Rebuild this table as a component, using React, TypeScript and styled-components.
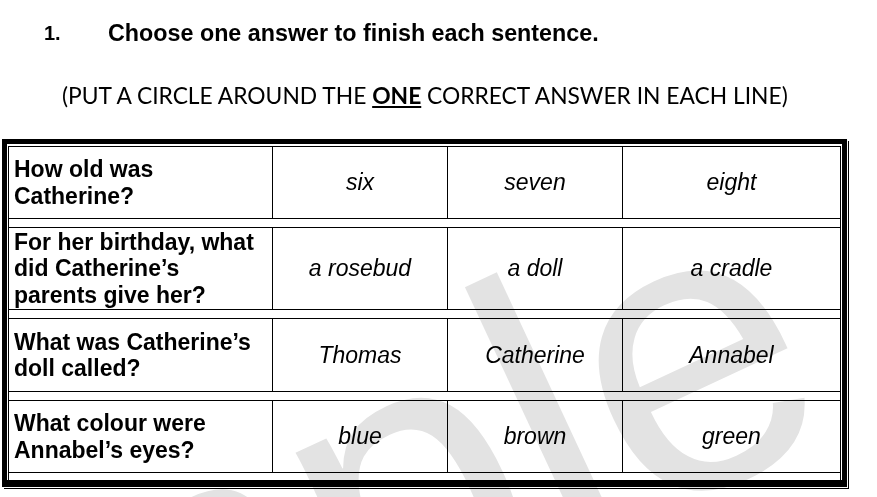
import React from 'react';
import styled, { createGlobalStyle } from 'styled-components';

const GlobalStyle = createGlobalStyle`
  html, body {
    margin: 0;
    padding: 0;
    background: #fff;
  }
  body {
    font-family: "Liberation Sans", Arial, sans-serif;
    color: #000;
  }
`;

const Page = styled.div`
  position: relative;
  width: 877px;
  height: 497px;
  overflow: hidden;
`;

const Heading = styled.div`
  display: flex;
  padding: 21px 0 0 44px;
  font-size: 23.3px;
  line-height: 24px;
  font-weight: bold;
`;

const Num = styled.span`
  width: 64px;
  font-size: 20px;
`;

const Instruction = styled.p`
  margin: 0;
  padding: 36px 0 0 62px;
  font-family: Lato, "Open Sans", sans-serif;
  font-size: 22.8px;
  line-height: 28px;

  u {
    font-weight: bold;
  }
`;

const Frame = styled.div`
  margin: 30px 0 0 2px;
  width: 845px;
  box-sizing: border-box;
  border: 5px solid #000;
  border-bottom-width: 7px;
  padding: 2px 1px 0 1px;
  box-shadow: 1px 1px 0 #fff, 2px 2px 0 #000;
`;

const Table = styled.div`
  border: 1px solid #000;
  border-bottom: none;
`;

const Row = styled.div<{ $h: number }>`
  display: grid;
  grid-template-columns: 264px 175px 175px 1fr;
  height: ${p => p.$h}px;
  border-bottom: 1px solid #000;
`;

const Spacer = styled.div<{ $last?: boolean }>`
  height: ${p => (p.$last ? 7 : 8)}px;
  border-bottom: ${p => (p.$last ? 'none' : '1px solid #000')};
`;

const Question = styled.div`
  display: flex;
  align-items: center;
  padding-left: 5px;
  border-right: 1px solid #000;
  font-weight: bold;
  font-size: 23px;
  line-height: 26.5px;
`;

const Answer = styled.div<{ $end?: boolean }>`
  display: flex;
  align-items: center;
  justify-content: center;
  border-right: ${p => (p.$end ? 'none' : '1px solid #000')};
  font-style: italic;
  font-size: 23px;
`;

const Watermark = styled.span`
  position: absolute;
  left: -607px;
  top: 231px;
  font-family: "Liberation Sans", Arial, sans-serif;
  font-size: 400px;
  line-height: 1;
  color: #e3e3e3;
  white-space: nowrap;
  transform-origin: 1090px 52px;
  transform: rotate(-25deg);
  mix-blend-mode: multiply;
  pointer-events: none;
`;

const rows = [
  { q: ['How old was', 'Catherine?'], a: ['six', 'seven', 'eight'], h: 71 },
  { q: ['For her birthday, what', 'did Catherine\u2019s', 'parents give her?'], a: ['a rosebud', 'a doll', 'a cradle'], h: 81 },
  { q: ['What was Catherine\u2019s', 'doll called?'], a: ['Thomas', 'Catherine', 'Annabel'], h: 72 },
  { q: ['What colour were', 'Annabel\u2019s eyes?'], a: ['blue', 'brown', 'green'], h: 71 },
];

const App: React.FC = () => {
  return (
    <Page>
      <GlobalStyle />
      <Heading>
        <Num>1.</Num>
        <span>Choose one answer to finish each sentence.</span>
      </Heading>
      <Instruction>
        (PUT A CIRCLE AROUND THE <u>ONE</u> CORRECT ANSWER IN EACH LINE)
      </Instruction>
      <Frame>
        <Table>
          {rows.map((r, i) => (
            <React.Fragment key={i}>
              <Row $h={r.h}>
                <Question>
                  <div>
                    {r.q.map((line, j) => (
                      <React.Fragment key={j}>
                        {j > 0 && <br />}
                        {line}
                      </React.Fragment>
                    ))}
                  </div>
                </Question>
                {r.a.map((ans, j) => (
                  <Answer key={j} $end={j === 2}>{ans}</Answer>
                ))}
              </Row>
              <Spacer $last={i === rows.length - 1} />
            </React.Fragment>
          ))}
        </Table>
      </Frame>
      <Watermark>Sample</Watermark>
    </Page>
  );
};

export default App;
